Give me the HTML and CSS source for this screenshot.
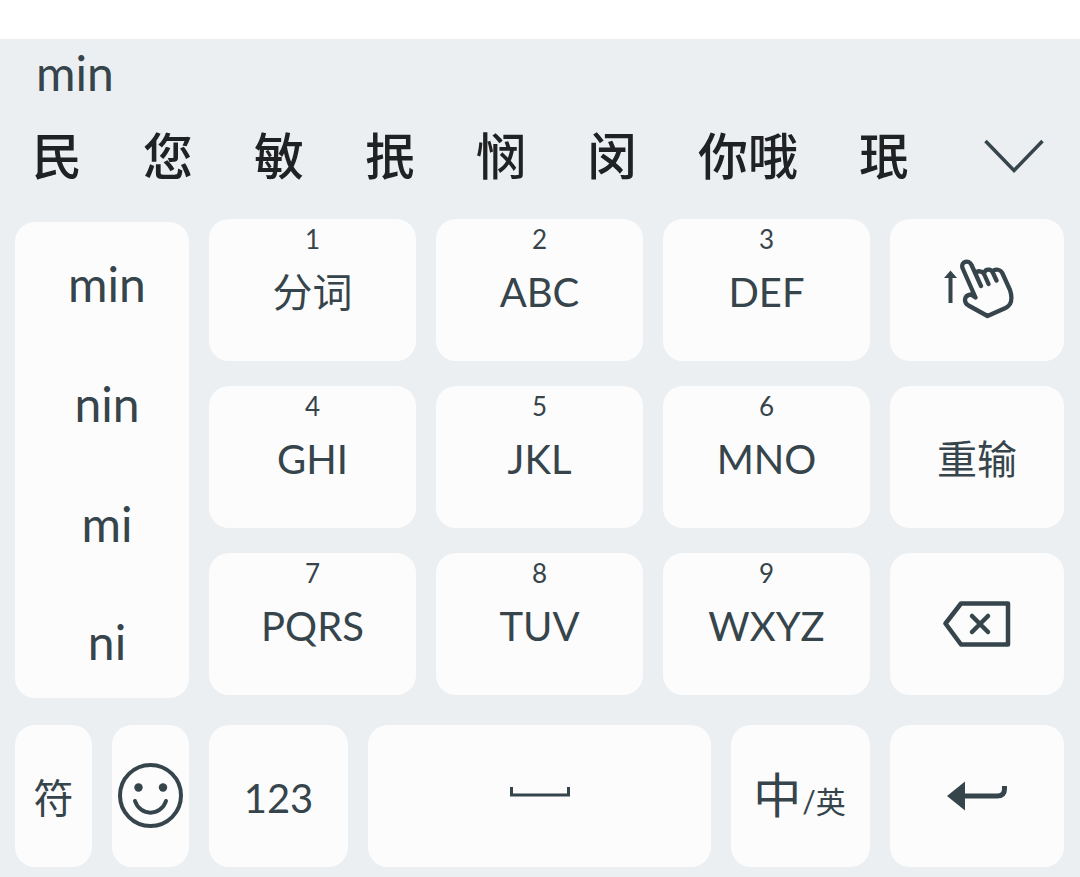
FILE: index.html
```html
<!DOCTYPE html>
<html lang="zh-CN">
<head>
    <meta charset="UTF-8">
    <meta name="viewport" content="width=device-width, initial-scale=1.0">
    <title>拼音九键键盘</title>
    <link rel="stylesheet" href="styles.css">
</head>
<body>
    <main class="keyboard">
        <div class="composing">min</div>

        <div class="candidates">
            <button class="candidate">民</button>
            <button class="candidate">您</button>
            <button class="candidate">敏</button>
            <button class="candidate">抿</button>
            <button class="candidate">悯</button>
            <button class="candidate">闵</button>
            <button class="candidate">你哦</button>
            <button class="candidate">珉</button>
            <button class="expand" aria-label="展开候选">
                <svg width="60" height="36" viewBox="0 0 60 36">
                    <path d="M1.500 2 L30 31.500 L58.500 2" fill="none" stroke="currentColor" stroke-width="3.500"/>
                </svg>
            </button>
        </div>

        <div class="keys">
            <div class="syllables">
                <button class="syllable">min</button>
                <button class="syllable">nin</button>
                <button class="syllable">mi</button>
                <button class="syllable">ni</button>
            </div>

            <button class="key letter"><span class="num">1</span><span class="label">分词</span></button>
            <button class="key letter"><span class="num">2</span><span class="label">ABC</span></button>
            <button class="key letter"><span class="num">3</span><span class="label">DEF</span></button>
            <button class="key" aria-label="上滑输入">
                <svg width="74" height="62" viewBox="940 259 74 62">
                    <path d="M950.500 270.500 L957 278 H952.500 V303 H948.500 V278 H944 Z" fill="currentColor"/>
                    <path d="M975.500 297.500 L962.500 268 C960.500 261 969.500 259.500 971.500 265 L981 286 M975.500 274 C977 270 983 270.500 984.500 275 L988.500 284 M984 273.500 C985.500 268 991.500 269 993 273 L996.500 280.500 M992.500 272 C995 268 1001 269.500 1002.500 273.500 L1010 290 C1012 296 1011.500 301 1010 304 Q1008.500 306.500 1005.500 308 L987.500 316 L968.500 305.500 C963.500 302.500 963.500 295.500 971 294.500 L975.500 297.500" fill="none" stroke="currentColor" stroke-width="4.300" stroke-linecap="round" stroke-linejoin="round"/>
                </svg>
            </button>

            <button class="key letter"><span class="num">4</span><span class="label">GHI</span></button>
            <button class="key letter"><span class="num">5</span><span class="label">JKL</span></button>
            <button class="key letter"><span class="num">6</span><span class="label">MNO</span></button>
            <button class="key">重输</button>

            <button class="key letter"><span class="num">7</span><span class="label">PQRS</span></button>
            <button class="key letter"><span class="num">8</span><span class="label">TUV</span></button>
            <button class="key letter"><span class="num">9</span><span class="label">WXYZ</span></button>
            <button class="key" aria-label="删除">
                <svg width="68" height="46" viewBox="0 0 68 46">
                    <path d="M18 2.500 H65 V43.500 H18 L2.500 22.500 Z" fill="none" stroke="currentColor" stroke-width="4.500" stroke-linejoin="round"/>
                    <path d="M29 15 L45 31 M45 15 L29 31" stroke="currentColor" stroke-width="4.500" stroke-linecap="round"/>
                </svg>
            </button>
        </div>

        <div class="bottom-row">
            <button class="key">符</button>
            <button class="key" aria-label="表情">
                <svg width="66" height="66" viewBox="0 0 66 66">
                    <circle cx="32.500" cy="32.500" r="30.500" fill="none" stroke="currentColor" stroke-width="4"/>
                    <circle cx="20.500" cy="24.500" r="4.200" fill="currentColor"/>
                    <circle cx="45" cy="24.500" r="4.200" fill="currentColor"/>
                    <path d="M17 38 C22 53.500 43 53.500 48 38" fill="none" stroke="currentColor" stroke-width="4" stroke-linecap="round"/>
                </svg>
            </button>
            <button class="key digits">123</button>
            <button class="key" aria-label="空格">
                <svg width="60" height="18" viewBox="0 0 60 18">
                    <path d="M1.500 0 V8 H58.500 V0" fill="none" stroke="currentColor" stroke-width="3"/>
                </svg>
            </button>
            <button class="key lang"><span class="lang-main">中</span><span class="lang-alt">/英</span></button>
            <button class="key" aria-label="回车">
                <svg width="60" height="30" viewBox="0 0 60 30">
                    <path d="M0 15 L18 0.500 V29.500 Z" fill="currentColor"/>
                    <path d="M17 15 H50 Q57.500 15 57.500 8 V5" fill="none" stroke="currentColor" stroke-width="5"/>
                </svg>
            </button>
        </div>
    </main>
</body>
</html>
```
FILE: styles.css
```css
* {
    box-sizing: border-box;
}

body {
    margin: 0;
    padding-top: 39px;
    background: #fff;
    color: #36444b;
    font-family: Lato, "Noto Sans CJK SC", sans-serif;
}

button {
    padding: 0;
    border: 0;
    background: none;
    color: inherit;
    font: inherit;
    cursor: pointer;
}

svg {
    display: block;
}

.keyboard {
    padding: 2px 16px 10px 15px;
    background: #ebeff2;
}

.composing {
    padding-left: 21px;
    font-size: 48px;
    line-height: 64px;
}

.candidates {
    display: flex;
    align-items: center;
    gap: 61px;
    height: 100px;
    padding: 0 20px 0 17px;
    color: #202122;
    font-size: 50px;
    white-space: nowrap;
}

.candidate {
    padding-bottom: 4px;
    font-weight: 500;
}

.expand {
    margin-left: auto;
    padding-top: 4px;
    color: #36444b;
}

.keys {
    display: grid;
    grid-template-columns: 174fr 207fr 207fr 207fr 174fr;
    grid-template-rows: repeat(3, 142px);
    gap: 25px 20px;
    margin-top: 14px;
}

.syllables {
    grid-row: 1 / 4;
    display: flex;
    flex-direction: column;
    margin: 3px 0 -3px;
    border-radius: 20px;
    background: #fcfcfc;
}

.syllable {
    flex: 0 0 120px;
    padding: 2px 0 0 10px;
    font-size: 48px;
}

/* последний слог чуть ниже, чтобы список не выходил за карточку */
.syllable:last-child {
    flex-shrink: 1;
}

.key {
    display: flex;
    align-items: center;
    justify-content: center;
    min-width: 0;
    border-radius: 20px;
    background: #fcfcfc;
    font-size: 40px;
}

.letter {
    flex-direction: column;
    justify-content: flex-start;
    padding-top: 6px;
}

.num {
    font-size: 26px;
    line-height: 28px;
}

.label {
    margin-top: 15px;
    line-height: 48px;
}

.bottom-row {
    display: grid;
    grid-template-columns: 77fr 77fr 139fr 343fr 139fr 174fr;
    grid-template-rows: 142px;
    gap: 20px;
    margin-top: 30px;
}

.digits {
    padding-top: 4px;
}

.lang {
    gap: 1px;
    padding-right: 2px;
    align-items: baseline;
    line-height: 140px;
}

.lang-main {
    font-size: 48px;
}

.lang-alt {
    font-size: 30px;
}
```
